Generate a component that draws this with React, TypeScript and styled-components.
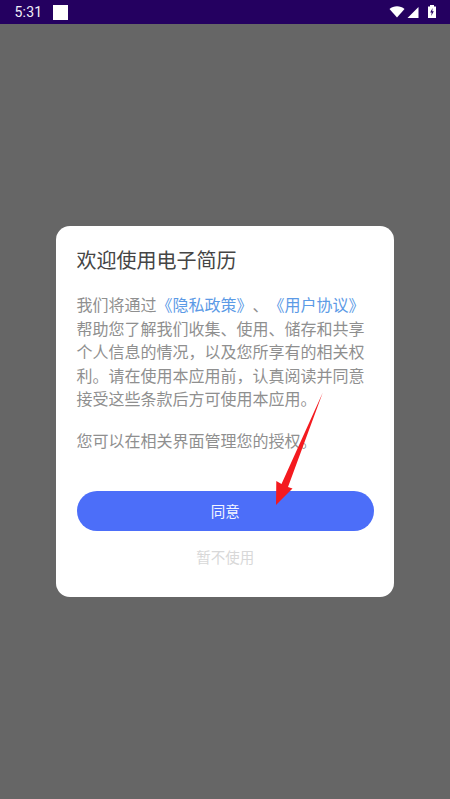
import React from 'react';
import styled, { createGlobalStyle } from 'styled-components';

const GlobalStyle = createGlobalStyle`
  html, body {
    margin: 0;
    padding: 0;
    background: #666666;
  }
  * {
    box-sizing: border-box;
  }
`;

const Screen = styled.div`
  position: relative;
  display: flex;
  flex-direction: column;
  width: 450px;
  height: 799px;
  overflow: hidden;
  background: #666666;
  font-family: 'Noto Sans CJK SC', 'Noto Sans', sans-serif;
  text-spacing-trim: space-all;
  font-kerning: none;
`;

const StatusBar = styled.div`
  display: flex;
  align-items: center;
  flex: 0 0 24px;
  padding: 0 12px 0 14.5px;
  background: #240060;
  color: #f2eef8;
`;

const Clock = styled.span`
  font-family: Roboto, sans-serif;
  font-size: 14px;
  letter-spacing: 0.2px;
`;

const NoticeSquare = styled.div`
  width: 15px;
  height: 15px;
  margin-left: 10.5px;
  background: #ffffff;
`;

const StatusIcons = styled.div`
  display: flex;
  align-items: flex-end;
  gap: 2px;
  height: 13px;
  margin-left: auto;
  margin-bottom: 2px;
`;

const BatteryIcon = styled.svg`
  margin-left: 5.5px;
`;

const Overlay = styled.div`
  flex: 1;
  display: flex;
  justify-content: center;
  padding-top: 202px;
`;

const Dialog = styled.div`
  display: flex;
  flex-direction: column;
  width: 338px;
  height: 371px;
  padding: 19px 20px 0 20.5px;
  border-radius: 14px;
  background: #ffffff;
`;

const Title = styled.div`
  font-size: 20px;
  line-height: 30px;
  color: #454545;
`;

const Paragraph = styled.p<{ $gap: number }>`
  margin: ${(p) => p.$gap}px 0 0;
  width: 296px;
  font-size: 16px;
  line-height: 23.6px;
  color: #8f8f8f;
`;

const PolicyLink = styled.span`
  color: #5c9ae6;
`;

const AgreeButton = styled.div`
  display: flex;
  align-items: center;
  justify-content: center;
  width: 297.5px;
  height: 40px;
  margin-top: 38px;
  border-radius: 20px;
  background: #4c6ef9;
  color: #f4f6ff;
  font-size: 14.5px;
`;

const DeclineButton = styled.div`
  width: 297.5px;
  margin-top: 15px;
  text-align: center;
  font-size: 14.5px;
  line-height: 22px;
  color: #d8d8d8;
`;

const ArrowMark = styled.svg`
  position: absolute;
  top: 0;
  left: 0;
  pointer-events: none;
`;

export default function App() {
  return (
    <Screen>
      <GlobalStyle />
      <StatusBar>
        <Clock>5:31</Clock>
        <NoticeSquare />
        <StatusIcons>
          <svg width="16" height="12" viewBox="0 0 16 12">
            <path d="M0.5 3 C4.5 -0.6 11.5 -0.6 15.5 3 L8 11.5 Z" fill="#ffffff" />
          </svg>
          <svg width="12" height="11" viewBox="0 0 12 11">
            <path d="M11.5 0 V11 H0.5 Z" fill="#ffffff" />
          </svg>
          <BatteryIcon width="12" height="13" viewBox="0 0 12 13">
            <path d="M2 1.5 H4 V0 H8 V1.5 H10 V13 H2 Z" fill="#ffffff" />
            <path d="M6.6 3 L4.2 7.5 H5.7 L5.2 11 L7.8 6.3 H6.2 Z" fill="#240060" />
          </BatteryIcon>
        </StatusIcons>
      </StatusBar>
      <Overlay>
        <Dialog>
          <Title>欢迎使用电子简历</Title>
          <Paragraph $gap={18}>
            我们将通过<PolicyLink>《隐私政策》</PolicyLink>、<PolicyLink>《用户协议》</PolicyLink>
            帮助您了解我们收集、使用、储存和共享个人信息的情况，以及您所享有的相关权利。请在使用本应用前，认真阅读并同意接受这些条款后方可使用本应用。
          </Paragraph>
          <Paragraph $gap={18}>您可以在相关界面管理您的授权。</Paragraph>
          <AgreeButton>同意</AgreeButton>
          <DeclineButton>暂不使用</DeclineButton>
        </Dialog>
      </Overlay>
      <ArrowMark width="450" height="799" viewBox="0 0 450 799">
        <path d="M322.8 392.5 L288 487 L292.5 488.5 L276 505 L276.3 481 L281.5 484 Z" fill="#f41a1f" />
      </ArrowMark>
    </Screen>
  );
}
